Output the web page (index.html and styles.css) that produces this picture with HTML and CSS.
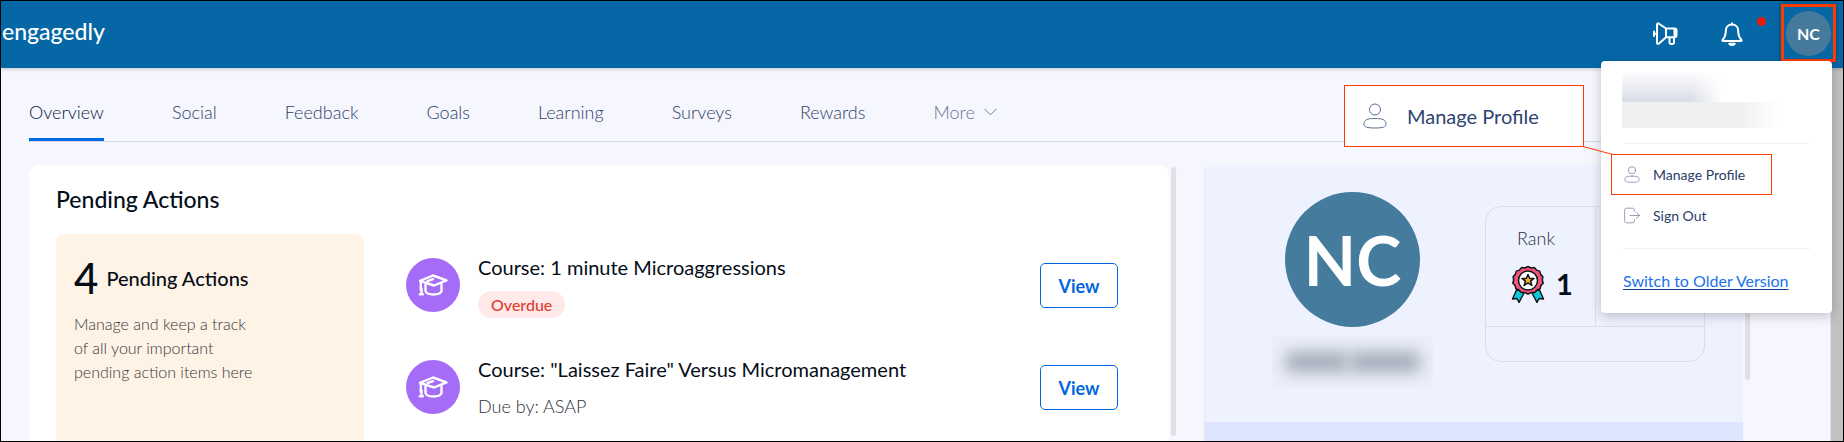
FILE: index.html
```html
<!DOCTYPE html>
<html lang="en">
<head>
<meta charset="utf-8">
<title>Engagedly</title>
<link rel="stylesheet" href="styles.css">
</head>
<body>
<svg class="defs" aria-hidden="true">
  <symbol id="user" viewBox="0 0 24 26">
    <circle cx="12" cy="6.5" r="5.5"/>
    <path d="M12 15.500c-7.500 0-11 1-11 5.800 0 2.600 3 3.700 11 3.700s11-1.100 11-3.700c0-4.800-3.500-5.800-11-5.800z"/>
  </symbol>
  <symbol id="cap" viewBox="0 0 30 22">
    <path d="M15 1.500 28.500 6.300 16 11.500 2 6.800z"/>
    <path d="M2.800 7v9M3.500 14.500v5.500M1.800 20.200h3"/>
    <path d="M7.500 10.500v6.500c.8 2.500 3.500 3.500 8 3.500s7.200-1 8-3.500v-6.500"/>
    <path d="M9.500 7.200l5.500-2"/>
  </symbol>
</svg>
<div class="frame">
  <header class="topbar">
    <a class="logo" href="#">engagedly</a>
    <div class="actions">
      <button class="icon-btn" aria-label="Announcements">
        <svg class="icon mega" viewBox="0 0 25 24"><path d="M4 2.500v19M4 2.500c.3-1 1-1.500 2-.8L13 6.500h8.500c1.500 0 2 1 2 2v4.500c0 1.500-.5 2.200-2 2.200H13L6 21.500c-1 .7-1.700.5-2-.5M13 6.500v8.700M21.500 7v8M16.500 15.500v5c0 2 4.500 2 4.500 0v-5M1 9.500v4.500M1 11.700h3"/></svg>
      </button>
      <button class="icon-btn" aria-label="Notifications">
        <svg class="icon bell" viewBox="0 0 22 24"><path d="M11 1.200v1.500M11 2.500c-4 0-6.200 2.800-6.200 6.500 0 5-1 6.500-3.300 9 -.4.700 0 1 .6 1h17.800c.6 0 1-.3.600-1-2.300-2.500-3.300-4-3.300-9 0-3.700-2.200-6.500-6.200-6.500z"/><path d="M8.300 21.800c1.200 1.500 4.200 1.500 5.400 0z"/></svg>
        <span class="dot"></span>
      </button>
      <button class="me" aria-label="Account menu"><span class="avatar">NC</span></button>
    </div>
  </header>
  <div class="page">
    <main class="main">
      <nav class="tabs">
        <a class="tab active" href="#">Overview</a>
        <a class="tab" href="#">Social</a>
        <a class="tab" href="#">Feedback</a>
        <a class="tab" href="#">Goals</a>
        <a class="tab" href="#">Learning</a>
        <a class="tab" href="#">Surveys</a>
        <a class="tab" href="#">Rewards</a>
        <button class="tab more">More <svg class="chev" viewBox="0 0 14 8"><path d="M1 1l6 6 6-6"/></svg></button>
      </nav>
      <div class="columns">
        <section class="card">
          <h1>Pending Actions</h1>
          <div class="pending">
            <div class="summary">
              <h2><span class="count">4</span> Pending Actions</h2>
              <p>Manage and keep a track<br>of all your important<br>pending action items here</p>
            </div>
            <ul class="items">
              <li class="item">
                <span class="badge"><svg viewBox="0 0 30 22"><use href="#cap"/></svg></span>
                <div class="text"><h3>Course: 1 minute Microaggressions</h3><span class="overdue">Overdue</span></div>
                <button class="view">View</button>
              </li>
              <li class="item">
                <span class="badge"><svg viewBox="0 0 30 22"><use href="#cap"/></svg></span>
                <div class="text"><h3>Course: "Laissez Faire" Versus Micromanagement</h3><span class="due">Due by: ASAP</span></div>
                <button class="view">View</button>
              </li>
            </ul>
          </div>
        </section>
        <div class="scroll left"></div>
        <aside class="profile">
          <div class="profile-top">
            <div class="person">
              <div class="big-avatar">NC</div>
              <div class="hidden-name"><i></i><i></i></div>
            </div>
            <div class="stats">
              <div class="rank">
                <span class="label">Rank</span>
                <div class="value">
                  <svg class="medal" viewBox="0 0 34 38">
                    <path class="rib" d="M6 24 1.500 34l4.500-.5 2 4 5-9.500zM28 24l4.500 10-4.500-.5-2 4-5-9.500z"/>
                    <path class="ring" d="M17 1.500l3 1.500 3.300-.4 2.200 2.500 3.200 1 .9 3.300 2.300 2.300-.6 3.300.9 3.200-2.300 2.400-.8 3.200-3.200 1.200-2.100 2.600-3.300-.2-3.500 1.600-3.500-1.600-3.300.2-2.100-2.600-3.200-1.200-.8-3.200-2.300-2.400.9-3.200-.6-3.300 2.300-2.300.9-3.300 3.200-1 2.200-2.500 3.300.4z"/>
                    <circle class="disc" cx="17" cy="15.500" r="9.500"/>
                    <path class="star" d="M17 9.500l1.700 4h4.300l-3.400 2.700 1.300 4.300-3.900-2.600-3.900 2.600 1.300-4.300-3.400-2.700h4.300z"/>
                  </svg>
                  <strong>1</strong>
                </div>
              </div>
              <div class="rank"></div>
              <div class="stats-foot"></div>
            </div>
          </div>
          <div class="profile-bottom"></div>
        </aside>
        <div class="scroll right"></div>
      </div>
    </main>
    <div class="page-scroll"></div>
  </div>
  <div class="menu">
    <div class="who"><i class="name"></i><i class="mail"></i></div>
    <div class="links">
      <a class="link marked" href="#"><svg class="line-icon" viewBox="0 0 24 26"><use href="#user"/></svg>Manage Profile</a>
      <a class="link" href="#"><svg class="line-icon" viewBox="0 0 24 24"><path d="M15.500 6V4c0-2-1-3-3-3H4C2 1 1 2 1 4v16c0 2 1 3 3 3h8.500c2 0 3-1 3-3v-2M9 12h14M18.500 7.500 23 12l-4.500 4.500"/></svg>Sign Out</a>
    </div>
    <a class="switch" href="#">Switch to Older Version</a>
  </div>
  <svg class="connector" viewBox="0 0 30 9"><path d="M0 0.500 30 8.500"/></svg>
  <div class="callout"><svg class="line-icon" viewBox="0 0 24 26"><use href="#user"/></svg>Manage Profile</div>
</div>
</body>
</html>
```
FILE: styles.css
```css
* { box-sizing: border-box; }
body, h1, h2, h3, p, ul { margin: 0; padding: 0; }
body { font-family: Lato, "Liberation Sans", sans-serif; color: #050d18; }
h1, h2 { font-weight: 500; }
h3 { font-weight: 400; }
a { text-decoration: none; color: inherit; }
button { font-family: inherit; cursor: pointer; border: 0; background: none; padding: 0; }
svg { fill: none; stroke: currentColor; stroke-linecap: round; stroke-linejoin: round; flex: none; }
.defs { position: absolute; width: 0; height: 0; }

.frame { position: relative; display: flex; flex-direction: column; min-height: 100vh; border: 1px solid #000; background: #f5f6fe; overflow: hidden; }

.topbar { display: flex; justify-content: space-between; align-items: flex-start; height: 67px; padding: 3px 7px 0 1px; background: #0667a7; box-shadow: 0 1px 4px rgba(0, 0, 0, .2); z-index: 1; }
.logo { margin-top: 13px; font-size: 23px; line-height: 28px; font-weight: 500; color: #fff; }
.actions { display: flex; align-items: flex-start; gap: 38px; }
.icon-btn { position: relative; display: flex; margin-top: 18px; color: #fff; }
.icon { height: 24px; stroke-width: 2; }
.mega { width: 25px; margin-right: 5px; }
.bell { width: 22px; }
.dot { position: absolute; left: 36px; top: -5px; width: 9px; height: 9px; border-radius: 50%; background: #e81c0c; }
.me { display: flex; justify-content: center; align-items: center; width: 55px; height: 58px; border: 3px solid #ff3c00; box-shadow: 0 0 4px rgba(0, 0, 0, .4); }
.avatar { width: 45px; border-radius: 50%; background: #467a9c; color: #fff; font-size: 16px; font-weight: 700; line-height: 45px; }

.page { display: flex; flex: 1; }
.main { display: flex; flex-direction: column; flex: 1; min-width: 0; padding-left: 28px; }
.page-scroll { width: 13px; background: #c1c1c1; border-left: 1px solid #e2e2e6; }

.tabs { display: flex; gap: 68px; height: 74px; margin-right: 80px; border-bottom: 1px solid #d5d8df; }
.tab { display: flex; align-items: center; height: 73px; padding-top: 18px; font-size: 18px; font-weight: 300; color: #2f4268; border-bottom: 3px solid transparent; }
.active { color: #0a1a40; border-color: #0068e5; }
.more { gap: 9px; color: #667590; }
.chev { width: 13px; height: 8px; }

.columns { display: flex; flex: 1; padding-top: 23px; }
.card { display: flex; flex-direction: column; flex: 1; min-width: 0; padding: 18px 27px 0; background: #fff; border-radius: 10px 10px 0 0; }
.card h1 { font-size: 23px; line-height: 32px; }
.pending { display: flex; flex: 1; margin-top: 19px; gap: 42px; }
.summary { width: 308px; padding: 20px 18px 0; background: #fff3e6; border-radius: 8px 8px 0 0; }
.summary h2 { display: flex; align-items: center; gap: 8px; font-size: 20px; line-height: 48px; }
.count { font-size: 42px; }
.summary p { margin-top: 10px; font-size: 16px; font-weight: 300; line-height: 24px; color: #35363b; }
.items { display: flex; flex-direction: column; gap: 24px; flex: 1; padding: 16px 24px 0 0; list-style: none; }
.item { display: flex; gap: 18px; height: 78px; }
.badge { display: flex; align-items: center; justify-content: center; width: 54px; height: 54px; margin-top: 8px; border-radius: 50%; background: #a46cf7; color: #fff; }
.badge svg { width: 30px; height: 22px; stroke-width: 2.4; }
.text { display: flex; flex-direction: column; align-items: flex-start; flex: 1; padding-top: 4px; gap: 11px; }
.text h3 { font-size: 20px; line-height: 26px; }
.overdue { padding: 0 13px; border-radius: 14px; background: #ffe9e9; color: #e03c31; font-size: 16px; line-height: 27px; font-weight: 500; }
.due { font-size: 18px; line-height: 26px; font-weight: 300; color: #2d333d; }
.view { width: 78px; height: 45px; margin-top: 13px; border: 1px solid #0066e0; border-radius: 5px; background: #fff; color: #0066e0; font-size: 18px; font-weight: 700; }

.scroll { width: 5px; border-radius: 3px; background: #dfe0e4; }
.left { margin: 2px 28px 5px 2px; }
.right { height: 215px; margin: 0 80px 0 2px; }
.profile { display: flex; flex-direction: column; width: 539px; border: 1px solid #e3e9fa; border-width: 0 0 0 1px; border-radius: 8px 0 0; background: #eef2ff; }
.profile-top { display: flex; flex: 1; gap: 52px; padding: 27px 0 0 67px; }
.profile-bottom { height: 19px; background: #dde5ff; }
.person { display: flex; flex-direction: column; align-items: center; gap: 8px; width: 161px; }
.big-avatar { width: 135px; border-radius: 50%; background: #457b9d; color: #fff; font-size: 68px; font-weight: 700; line-height: 135px; text-align: center; }
.hidden-name { display: flex; align-items: center; justify-content: center; gap: 2px; width: 161px; height: 53px; background: #ebeffa; overflow: hidden; }
.hidden-name i { width: 62px; height: 20px; background: #a2a9b6; filter: blur(8px); }
.hidden-name i + i { width: 70px; }
.stats { display: grid; grid-template: 119px 37px / 110px 108px; margin-top: 14px; height: 156px; border: 1px solid #dcdee4; border-radius: 16px; }
.rank { padding: 20px 0 0 25px; }
.rank:first-child { border-right: 1px solid #dcdee4; }
.label { padding-left: 6px; font-size: 18px; line-height: 22px; font-weight: 300; color: #2a2f3a; }
.stats-foot { grid-column: 1 / 3; border-top: 1px solid #dcdee4; }
.value { display: flex; align-items: center; gap: 11px; margin-top: 16px; }
.value strong { font-size: 29px; line-height: 38px; font-weight: 700; }
.medal { width: 34px; height: 38px; stroke: #14161c; stroke-width: 1.5; }
.rib { fill: #10c8dc; }
.ring { fill: #f2567b; }
.disc { fill: #fff; }
.star { fill: #f6b42c; }

.menu { position: absolute; top: 60px; right: 11px; z-index: 2; width: 231px; padding: 11px 10px 10px; background: #fff; border-radius: 4px; box-shadow: 0 3px 12px rgba(0, 0, 0, .22); }
.who { display: flex; flex-direction: column; height: 72px; margin: 0 13px; border-bottom: 1px solid #f1f1f3; }
.who i { display: block; margin-left: -2px; }
.name { width: 100px; height: 30px; background: linear-gradient(90deg, transparent 70%, #fff), linear-gradient(#fdfdfe, #d9dde7); }
.mail { width: 156px; height: 26px; background: linear-gradient(90deg, #eff0f2, #eff0f2 75%, #fff); }
.links { display: flex; flex-direction: column; align-items: flex-start; padding: 10px 0 12px; }
.link { display: flex; align-items: center; gap: 13px; width: 161px; height: 41px; padding: 0 12px; border: 1px solid transparent; font-size: 14px; color: #2a3d66; }
.marked, .callout { border: 1px solid #ff3c00; }
.line-icon { width: 16px; height: 17px; stroke-width: 1; color: #5d6e94; }
.switch { display: block; margin: 0 12px; padding: 22px 0 12px; border-top: 1px solid #f1f1f3; font-size: 16px; line-height: 20px; color: #1a73e8; text-decoration: underline; text-decoration-color: #0a3f8f; text-underline-offset: 2px; }

.callout { position: absolute; top: 84px; right: 259px; z-index: 3; display: flex; align-items: center; gap: 20px; width: 240px; height: 62px; padding-left: 18px; background: #fff; font-size: 20px; color: #2f4470; }
.callout .line-icon { width: 24px; height: 26px; }
.connector { position: absolute; top: 145px; right: 230px; z-index: 3; width: 30px; height: 9px; color: #ff3c00; stroke-width: 1; }
```
